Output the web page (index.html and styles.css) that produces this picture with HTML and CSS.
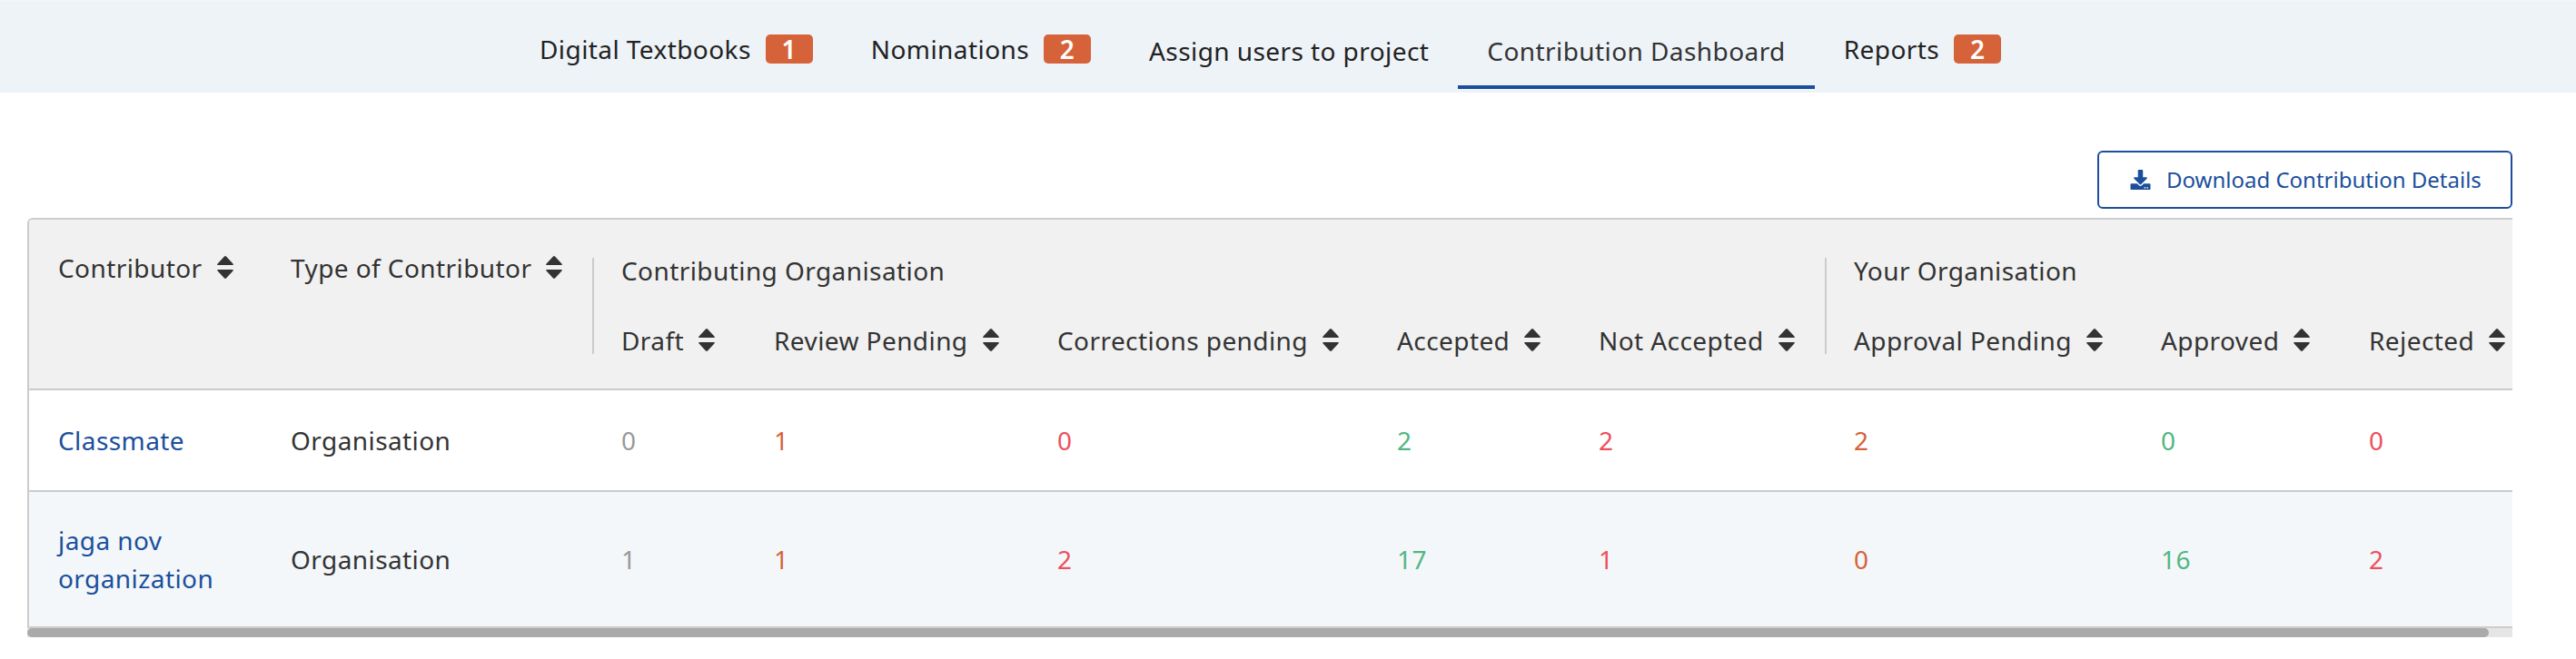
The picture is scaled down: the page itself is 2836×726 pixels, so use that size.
FILE: index.html
```
<!DOCTYPE html>
<html lang="en">
<head>
<meta charset="utf-8">
<title>Contribution Dashboard</title>
<link rel="stylesheet" href="styles.css">
</head>
<body>
<svg width="0" height="0" class="defs" aria-hidden="true">
  <symbol id="sort" viewBox="0 0 18 25"><path d="M8 .5Q9-.4 10 .5L17.4 8.4Q18.6 10 16.8 10H1.2Q-.6 10 .6 8.4ZM1.2 15H16.8Q18.6 15 17.4 16.6L10 24.5Q9 25.4 8 24.5L.6 16.6Q-.6 15 1.2 15Z"/></symbol>
</svg>
<nav class="tabs">
  <a class="tab">Digital Textbooks <span class="badge">1</span></a>
  <a class="tab">Nominations <span class="badge">2</span></a>
  <a class="tab plain">Assign users to project</a>
  <a class="tab plain active">Contribution Dashboard</a>
  <a class="tab">Reports <span class="badge">2</span></a>
</nav>
<main class="content">
  <div class="actions">
    <button class="download">
      <svg class="download-icon" viewBox="0 0 512 512"><path fill-rule="evenodd" d="M216 0h80c13.300 0 24 10.700 24 24v168h87.700c17.800 0 26.700 21.500 14.100 34.100L269.700 378.300c-7.500 7.500-19.800 7.500-27.300 0L90.100 226.100c-12.600-12.600-3.700-34.100 14.100-34.100H192V24c0-13.300 10.700-24 24-24zm296 376v112c0 13.300-10.700 24-24 24H24c-13.300 0-24-10.700-24-24V376c0-13.300 10.700-24 24-24h146.700l49 49c20.100 20.100 52.500 20.100 72.600 0l49-49H488c13.300 0 24 10.700 24 24zm-124 88c0-11-9-20-20-20s-20 9-20 20 9 20 20 20 20-9 20-20zm64 0c0-11-9-20-20-20s-20 9-20 20 9 20 20 20 20-9 20-20z"/></svg>
      <span>Download Contribution Details</span>
    </button>
  </div>
  <div class="table">
    <div class="row head">
      <div class="cell">Contributor<svg class="sort"><use href="#sort"/></svg></div>
      <div class="cell">Type of Contributor<svg class="sort"><use href="#sort"/></svg></div>
      <div class="group group-contributing">
        <div class="group-title">Contributing Organisation</div>
        <div class="cell">Draft<svg class="sort"><use href="#sort"/></svg></div>
        <div class="cell">Review Pending<svg class="sort"><use href="#sort"/></svg></div>
        <div class="cell">Corrections pending<svg class="sort"><use href="#sort"/></svg></div>
        <div class="cell">Accepted<svg class="sort"><use href="#sort"/></svg></div>
        <div class="cell">Not Accepted<svg class="sort"><use href="#sort"/></svg></div>
      </div>
      <div class="group group-own">
        <div class="group-title">Your Organisation</div>
        <div class="cell">Approval Pending<svg class="sort"><use href="#sort"/></svg></div>
        <div class="cell">Approved<svg class="sort"><use href="#sort"/></svg></div>
        <div class="cell">Rejected<svg class="sort"><use href="#sort"/></svg></div>
      </div>
    </div>
    <div class="row body">
      <a class="cell link">Classmate</a>
      <div class="cell">Organisation</div>
      <div class="cell muted">0</div>
      <div class="cell orange">1</div>
      <div class="cell red">0</div>
      <div class="cell green">2</div>
      <div class="cell red">2</div>
      <div class="cell orange">2</div>
      <div class="cell green">0</div>
      <div class="cell red">0</div>
    </div>
    <div class="row body alt">
      <a class="cell link">jaga nov organization</a>
      <div class="cell">Organisation</div>
      <div class="cell muted">1</div>
      <div class="cell orange">1</div>
      <div class="cell red">2</div>
      <div class="cell green">17</div>
      <div class="cell red">1</div>
      <div class="cell orange">0</div>
      <div class="cell green">16</div>
      <div class="cell red">2</div>
    </div>
  </div>
  <div class="scroll-track"><div class="scroll-thumb"></div></div>
</main>
</body>
</html>
```
FILE: styles.css
```
* { box-sizing: border-box; }
body {
  margin: 0;
  background: #fff;
  color: #333;
  font: 28px/42px "Noto Sans", sans-serif;
  letter-spacing: .42px;
}
.defs { position: absolute; }

.tabs {
  display: flex;
  height: 102px;
  padding-left: 562px;
  border-top: 2px solid #f2f6fa;
  background: #eef3f8;
  color: #222;
}
.tab {
  display: flex;
  align-items: center;
  gap: 16px;
  height: 96px;
  padding: 12px 32px 0;
  border-bottom: 4px solid transparent;
  white-space: nowrap;
}
.tab.plain { padding-top: 16px; }
.tab.active { border-bottom-color: #1b4f9c; color: #333; }
.badge {
  width: 52px;
  height: 32px;
  border-radius: 5px;
  background: #d66239;
  color: #fff;
  font-weight: 600;
  line-height: 32px;
  text-align: center;
}

.content { padding: 64px 70px 0 30px; }
.actions { display: flex; justify-content: flex-end; margin-bottom: 10px; }
.download {
  display: flex;
  align-items: center;
  gap: 17px;
  width: 457px;
  height: 64px;
  padding: 0 0 0 34px;
  border: 2px solid #1b4f9c;
  border-radius: 6px;
  background: #fff;
  color: #1b4f9c;
  font: 24px/36px "Noto Sans", sans-serif;
  white-space: nowrap;
}
.download-icon { width: 23px; height: 22px; fill: currentColor; }

.table {
  border: 2px solid #ccc;
  border-right: 0;
  border-top-left-radius: 6px;
  overflow: hidden;
}
.row {
  display: grid;
  grid-template-columns: 256px 364px 168px 312px 374px 222px 281px 338px 229px 190px;
}
.cell { padding-left: 32px; }
.head {
  height: 186px;
  padding-top: 42px;
  background: #f1f1f1;
  white-space: nowrap;
}
.head > .cell { margin-top: -10px; }
.sort {
  width: 18px;
  height: 25px;
  margin-left: 16px;
  vertical-align: -1px;
  fill: #333;
}
.group {
  display: grid;
  grid-template-columns: subgrid;
  grid-template-rows: 28px 78px;
  height: 106px;
  border-left: 2px solid #ccc;
}
.group-contributing { grid-column: 3 / 8; }
.group-own { grid-column: 8 / 11; }
.group-title { grid-column: 1 / -1; padding-left: 30px; margin-top: -7px; }
.group .cell { margin-top: 42px; }
.group-title + .cell { padding-left: 30px; }
.body {
  align-items: center;
  height: 112px;
  border-top: 2px solid #ccc;
}
.alt { height: 150px; background: #f3f7fa; }
.link { padding-right: 32px; color: #1b4f9c; }
.muted { color: #999; }
.orange { color: #d66239; }
.red { color: #ee4f5c; }
.green { color: #51b782; }

.scroll-track { height: 10px; background: #e5e5e5; }
.scroll-thumb {
  width: 2710px;
  height: 10px;
  border-radius: 5px;
  background: #aaa;
}
```
